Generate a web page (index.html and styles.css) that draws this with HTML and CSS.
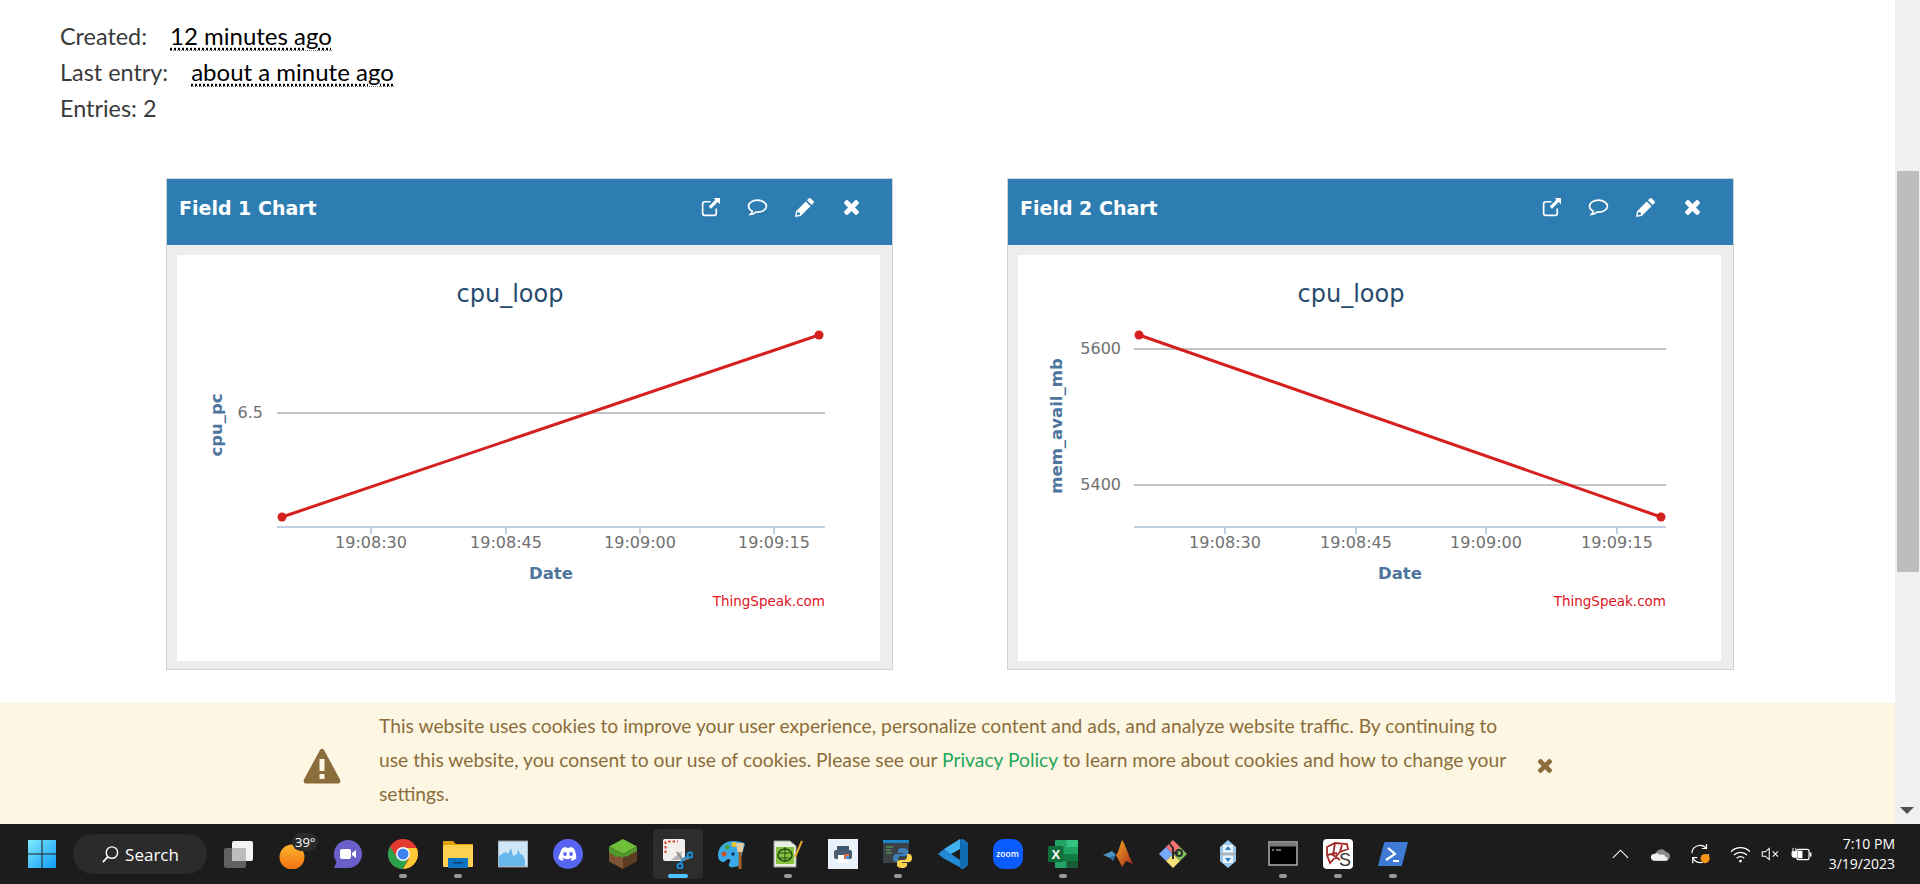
FILE: index.html
```html
<!DOCTYPE html>
<html lang="en">
<head>
    <meta charset="UTF-8">
    <meta name="viewport" content="width=device-width, initial-scale=1.0">
    <title>Channel</title>
    <link rel="stylesheet" href="styles.css">
</head>
<body>
    <div class="window">
        <div class="page">
            <div class="channel-info">
                <div>Created: <abbr class="timeago">12 minutes ago</abbr></div>
                <div>Last entry: <abbr class="timeago">about a minute ago</abbr></div>
                <div>Entries: 2</div>
            </div>

            <div class="charts">
                <section class="card">
                    <header class="card-head">
                        <h3>Field 1 Chart</h3>
                        <div class="card-tools">
                            <svg viewBox="0 0 20 20"><path class="tool-line" d="M15.5 11v4.5a2 2 0 0 1-2 2h-9a2 2 0 0 1-2-2v-9a2 2 0 0 1 2-2H10"/><path class="tool-fill" d="M13 1h6v6l-2.2-2.2-6.3 6.4-2.2-2.2 6.4-6.3z"/></svg>
                            <svg viewBox="0 0 20 20"><path class="tool-line" d="M10 3c-4.7 0-8.5 2.5-8.5 5.8 0 2 1.4 3.7 3.5 4.7-.2 1.2-.8 2.3-1.6 3 2 0 3.900-.9 5.200-2.200.4 0 .9.1 1.400.1 4.700 0 8.500-2.600 8.500-5.600S14.700 3 10 3z"/></svg>
                            <svg viewBox="0 0 20 20"><path class="tool-fill" d="M14 1.5a1.5 1.5 0 0 1 2.100 0l2.400 2.400a1.500 1.500 0 0 1 0 2.100l-1.700 1.700-4.500-4.500zM11.200 4.300l4.500 4.500L6.400 18.100 1 19l.9-5.400zM3.200 14.200l-.6 3.200 3.200-.6-.5-2.100z"/></svg>
                            <svg viewBox="0 0 20 20"><path class="tool-fill" d="M6.500 3.200 10 6.700l3.500-3.500a1.200 1.200 0 0 1 1.700 0l1.600 1.600a1.200 1.200 0 0 1 0 1.700L13.300 10l3.500 3.500a1.200 1.200 0 0 1 0 1.700l-1.600 1.600a1.200 1.200 0 0 1-1.700 0L10 13.300l-3.500 3.500a1.200 1.200 0 0 1-1.700 0l-1.600-1.600a1.200 1.200 0 0 1 0-1.700L6.700 10 3.200 6.500a1.200 1.200 0 0 1 0-1.700l1.600-1.600a1.200 1.200 0 0 1 1.700 0z"/></svg>
                        </div>
                    </header>
                    <div class="card-body">
                        <svg class="chart" viewBox="0 0 703 406">
                            <text class="chart-title" x="333" y="47">cpu_loop</text>
                            <line class="grid" x1="100" y1="158" x2="648" y2="158"/>
                            <line class="axis" x1="100" y1="272" x2="648" y2="272"/>
                            <line class="axis" x1="194" y1="272" x2="194" y2="279"/>
                            <line class="axis" x1="329" y1="272" x2="329" y2="279"/>
                            <line class="axis" x1="463" y1="272" x2="463" y2="279"/>
                            <line class="axis" x1="597" y1="272" x2="597" y2="279"/>
                            <text class="tick" x="194" y="293">19:08:30</text>
                            <text class="tick" x="329" y="293">19:08:45</text>
                            <text class="tick" x="463" y="293">19:09:00</text>
                            <text class="tick" x="597" y="293">19:09:15</text>
                            <text class="tick tick-y" x="86" y="163">6.5</text>
                            <text class="axis-title" x="374" y="324">Date</text>
                            <text class="axis-title" transform="translate(45 170) rotate(-90)">cpu_pc</text>
                            <text class="credit" x="648" y="351">ThingSpeak.com</text>
                            <line class="series" x1="105" y1="262" x2="642" y2="80"/>
                            <circle class="point" cx="105" cy="262" r="4.5"/>
                            <circle class="point" cx="642" cy="80" r="4.5"/>
                        </svg>
                    </div>
                </section>

                <section class="card">
                    <header class="card-head">
                        <h3>Field 2 Chart</h3>
                        <div class="card-tools">
                            <svg viewBox="0 0 20 20"><path class="tool-line" d="M15.5 11v4.5a2 2 0 0 1-2 2h-9a2 2 0 0 1-2-2v-9a2 2 0 0 1 2-2H10"/><path class="tool-fill" d="M13 1h6v6l-2.2-2.2-6.3 6.4-2.2-2.2 6.4-6.3z"/></svg>
                            <svg viewBox="0 0 20 20"><path class="tool-line" d="M10 3c-4.7 0-8.5 2.5-8.5 5.8 0 2 1.4 3.7 3.5 4.7-.2 1.2-.8 2.3-1.6 3 2 0 3.900-.9 5.200-2.200.4 0 .9.1 1.400.1 4.700 0 8.500-2.600 8.500-5.600S14.700 3 10 3z"/></svg>
                            <svg viewBox="0 0 20 20"><path class="tool-fill" d="M14 1.5a1.5 1.5 0 0 1 2.100 0l2.400 2.400a1.500 1.500 0 0 1 0 2.100l-1.700 1.700-4.500-4.500zM11.200 4.300l4.500 4.500L6.400 18.100 1 19l.9-5.400zM3.200 14.200l-.6 3.200 3.200-.6-.5-2.100z"/></svg>
                            <svg viewBox="0 0 20 20"><path class="tool-fill" d="M6.500 3.200 10 6.700l3.500-3.500a1.200 1.200 0 0 1 1.700 0l1.600 1.600a1.200 1.200 0 0 1 0 1.700L13.300 10l3.500 3.500a1.200 1.200 0 0 1 0 1.700l-1.600 1.600a1.200 1.200 0 0 1-1.700 0L10 13.300l-3.500 3.500a1.200 1.200 0 0 1-1.700 0l-1.600-1.600a1.200 1.200 0 0 1 0-1.700L6.700 10 3.200 6.500a1.200 1.200 0 0 1 0-1.700l1.600-1.600a1.200 1.200 0 0 1 1.700 0z"/></svg>
                        </div>
                    </header>
                    <div class="card-body">
                        <svg class="chart" viewBox="0 0 703 406">
                            <text class="chart-title" x="333" y="47">cpu_loop</text>
                            <line class="grid" x1="116" y1="94" x2="648" y2="94"/>
                            <line class="grid" x1="116" y1="230" x2="648" y2="230"/>
                            <line class="axis" x1="116" y1="272" x2="648" y2="272"/>
                            <line class="axis" x1="207" y1="272" x2="207" y2="279"/>
                            <line class="axis" x1="338" y1="272" x2="338" y2="279"/>
                            <line class="axis" x1="468" y1="272" x2="468" y2="279"/>
                            <line class="axis" x1="599" y1="272" x2="599" y2="279"/>
                            <text class="tick" x="207" y="293">19:08:30</text>
                            <text class="tick" x="338" y="293">19:08:45</text>
                            <text class="tick" x="468" y="293">19:09:00</text>
                            <text class="tick" x="599" y="293">19:09:15</text>
                            <text class="tick tick-y" x="103" y="99">5600</text>
                            <text class="tick tick-y" x="103" y="235">5400</text>
                            <text class="axis-title" x="382" y="324">Date</text>
                            <text class="axis-title" transform="translate(44 171) rotate(-90)">mem_avail_mb</text>
                            <text class="credit" x="648" y="351">ThingSpeak.com</text>
                            <line class="series" x1="121" y1="80" x2="643" y2="262"/>
                            <circle class="point" cx="121" cy="80" r="4.5"/>
                            <circle class="point" cx="643" cy="262" r="4.5"/>
                        </svg>
                    </div>
                </section>
            </div>

            <div class="cookie-bar">
                <svg class="cookie-warn" viewBox="0 0 38 36"><path d="M19 1c1 0 1.800.5 2.300 1.400l15.800 29.300c.9 1.700-.3 3.800-2.300 3.800H3.200c-2 0-3.200-2.100-2.300-3.800L16.700 2.400C17.200 1.500 18 1 19 1z"/><rect x="16.5" y="11" width="5" height="12" fill="#fdf6e3"/><rect x="16.5" y="26" width="5" height="5" fill="#fdf6e3"/></svg>
                <p class="cookie-text">This website uses cookies to improve your user experience, personalize content and ads, and analyze website traffic. By continuing to<br>use this website, you consent to our use of cookies. Please see our <a href="#">Privacy Policy</a> to learn more about cookies and how to change your<br>settings.</p>
                <svg class="cookie-close" viewBox="0 0 20 20"><path d="M6.500 3.200 10 6.700l3.500-3.500a1.200 1.200 0 0 1 1.700 0l1.600 1.600a1.200 1.200 0 0 1 0 1.700L13.300 10l3.500 3.500a1.200 1.200 0 0 1 0 1.700l-1.600 1.600a1.200 1.200 0 0 1-1.700 0L10 13.300l-3.500 3.500a1.200 1.200 0 0 1-1.700 0l-1.600-1.600a1.200 1.200 0 0 1 0-1.700L6.700 10 3.200 6.500a1.200 1.200 0 0 1 0-1.700l1.600-1.600a1.200 1.200 0 0 1 1.700 0z"/></svg>
            </div>
        </div>

        <div class="scrollbar">
            <div class="scroll-thumb"></div>
            <div class="scroll-arrow"></div>
        </div>
    </div>

    <footer class="taskbar">
        <div class="slot">
            <svg viewBox="0 0 30 30"><defs><linearGradient id="win" x1="0" y1="0" x2="1" y2="1"><stop offset="0" stop-color="#7eeaff"/><stop offset="1" stop-color="#0f9bf5"/></linearGradient></defs><path fill="url(#win)" d="M1 1h13.500v13.500H1zM15.500 1H29v13.500H15.500zM1 15.500h13.500V29H1zM15.500 15.500H29V29H15.500z"/></svg>
        </div>
        <div class="search-pill">
            <svg viewBox="0 0 20 20"><circle cx="11.5" cy="8" r="6" fill="none" stroke="#fff" stroke-width="1.5"/><path d="M7.300 12.300 2 18" stroke="#fff" stroke-width="1.8" fill="none"/></svg>
            <span>Search</span>
        </div>
        <div class="slot">
            <svg viewBox="0 0 30 30"><rect x="9" y="2" width="21" height="20" rx="2" fill="#f4f4f4"/><rect x="1" y="9" width="22" height="20" rx="2" fill="#6d6d6d" fill-opacity=".85"/><rect x="9" y="9" width="14" height="13" fill="#bdbdbd"/></svg>
        </div>
        <div class="slot">
            <svg viewBox="0 0 30 30"><defs><linearGradient id="sun" x1="0" y1="0" x2="0" y2="1"><stop offset="0" stop-color="#fdb52c"/><stop offset="1" stop-color="#f0700f"/></linearGradient></defs><circle cx="14" cy="18" r="12.5" fill="url(#sun)"/></svg>
            <span class="temp">39°</span>
        </div>
        <div class="slot">
            <svg viewBox="0 0 30 30"><path fill="#6a5fc8" d="M15 1a14 14 0 0 1 0 28H1l2.500-6A14 14 0 0 1 15 1z"/><rect x="7" y="10" width="11" height="10" rx="2" fill="#fff"/><path fill="#fff" d="M19 14l4-3v8l-4-3z"/></svg>
        </div>
        <div class="slot running">
            <svg viewBox="0 0 30 30"><circle cx="15" cy="15" r="15" fill="#e33b2e"/><path fill="#2aa24a" d="M2 7.500A15 15 0 0 0 15 30l5-10H10z"/><path fill="#fcc934" d="M15 9h13.700A15 15 0 0 1 15 30l6-10z"/><circle cx="15" cy="15" r="7" fill="#fff"/><circle cx="15" cy="15" r="5.500" fill="#3d82f0"/></svg>
        </div>
        <div class="slot running">
            <svg viewBox="0 0 30 30"><path fill="#e0a100" d="M0 3a1 1 0 0 1 1-1h9l3 3h17v6H0z"/><rect y="6" width="30" height="22" rx="1" fill="#fcd14f"/><path fill="#0a74c4" d="M5 19h20v9a1 1 0 0 1-1 1H6a1 1 0 0 1-1-1z"/><rect x="10" y="23" width="10" height="1.5" fill="#063f70"/></svg>
        </div>
        <div class="slot">
            <svg viewBox="0 0 30 30"><rect y="2" width="30" height="26" fill="#cfe6f6" stroke="#8b8f93"/><path fill="#68b7ec" d="M1 27V17l4-3 3-1 2 2 3-6 2 8 4-2 1-5 2 5 3 1 2 5v6z"/></svg>
        </div>
        <div class="slot">
            <svg viewBox="0 0 30 30"><circle cx="15" cy="15" r="15" fill="#5865f2"/><path fill="#fff" d="M9.500 9c2-.9 3.500-1 3.800-1l.5 1c.8-.1 1.600-.1 2.400 0l.5-1c.3 0 1.800.1 3.800 1 2 3 3 6.500 2.700 10.500-1.700 1.200-3.200 1.900-4.600 2.300l-1-1.600c.6-.2 1.100-.5 1.600-.8l-.4-.3c-3 1.400-6.100 1.400-9.200 0l-.4.3c.5.3 1 .6 1.600.8l-1 1.600c-1.400-.4-2.900-1.100-4.600-2.300C6.600 15.500 7.500 12 9.500 9z"/><ellipse cx="12" cy="15" rx="1.8" ry="2" fill="#5865f2"/><ellipse cx="18" cy="15" rx="1.8" ry="2" fill="#5865f2"/></svg>
        </div>
        <div class="slot">
            <svg viewBox="0 0 30 30"><path fill="#6fbf3b" d="M15 0 29 7.500 15 15 1 7.500z"/><path fill="#7c5433" d="M1 7.500 15 15v15L1 22.500z"/><path fill="#5c3c22" d="M29 7.500 15 15v15l14-7.500z"/><path fill="#4f9a2b" d="M1 7.500 15 15v4l-4-2-3 1-7-5zM29 7.500 15 15v3l5-1 3-2 6-3z"/></svg>
        </div>
        <div class="slot active">
            <svg viewBox="0 0 30 30"><rect x="0" y="0" width="22" height="22" rx="2" fill="#f2efed"/><path d="M2.500 14V3.500A1 1 0 0 1 3.500 2.500H15" fill="none" stroke="#d8452e" stroke-width="2" stroke-dasharray="2.5 2"/><path d="M19 12 18 21 8 21z" fill="#b5b5b5"/><path d="M14 13 19 20 M26 19 19 21" stroke="#8c8c8c" stroke-width="2"/><circle cx="27" cy="16" r="2.5" fill="none" stroke="#1b8fd8" stroke-width="2"/><circle cx="17" cy="27" r="2.5" fill="none" stroke="#1b8fd8" stroke-width="2"/><path d="M25 17 19 21 18 25" fill="none" stroke="#1b8fd8" stroke-width="2"/></svg>
        </div>
        <div class="slot">
            <svg viewBox="0 0 30 30"><path fill="#39a9e8" d="M15 2C7 2 0 8 0 16c0 5 3 7 5 7 3 0 3-3 6-3 2 0 1 3 0 5-1 2 1 4 5 3l5-1 3-12 3-10C25 3 20 2 15 2z"/><circle cx="6" cy="15" r="2.5" fill="#c9502d"/><circle cx="9" cy="8" r="2.5" fill="#46a049"/><circle cx="16" cy="5.5" r="2.5" fill="#efc21e"/><circle cx="15" cy="15" r="1.8" fill="#143a5e"/><rect x="20.5" y="13" width="3" height="17" fill="#a4622a"/><path fill="#e6c9a0" d="M18 4h8l-1.500 9h-5z"/></svg>
        </div>
        <div class="slot running">
            <svg viewBox="0 0 30 30"><path fill="#e8eee4" stroke="#9aa09a" d="M1 2h16l6 5v21H1z"/><rect x="3" y="8" width="18" height="17" fill="#86c440"/><ellipse cx="12" cy="16" rx="7" ry="6" fill="none" stroke="#1f4d10" stroke-width="1.5"/><path d="M6 14h12M7 19h10M12 8v15" stroke="#1f4d10"/><path d="M22 18 29 2" stroke="#e0a92c" stroke-width="2"/></svg>
        </div>
        <div class="slot">
            <svg viewBox="0 0 30 30"><rect width="30" height="30" fill="#ebf1fa"/><path fill="#3e5870" d="M9 7h12v4H9z"/><rect x="6" y="11" width="18" height="9" rx="2" fill="#4a5d70"/><rect x="10" y="16" width="10" height="8" fill="#fff"/><rect x="16" y="15" width="5" height="5" fill="#e56b4a"/><rect x="18" y="17" width="3" height="3" fill="#4a8ee0"/></svg>
        </div>
        <div class="slot running">
            <svg viewBox="0 0 30 30"><rect x="0" y="1" width="26" height="23" fill="#3b4144"/><rect y="1" width="26" height="3" fill="#1b85c8"/><path d="M3 8h7M3 11h5M3 14h6" stroke="#5cb85c"/><path fill="#3f7fb8" d="M19 9c-4 0-4 2-4 3v2h5v1h-7c-2 0-3 2-3 4s1 4 3 4h2v-3c0-1.500 1.500-3 3-3h4c1.500 0 3-1 3-3v-2c0-2-2-3-6-3z"/><path fill="#fdd449" d="M19 29c4 0 5-2 5-3v-2h-5v-1h7c2 0 3-2 3-4s-1-4-3-4h-2v3c0 1.500-1.500 3-3 3h-4c-1.500 0-3 1-3 3v2c0 2 2 3 5 3z"/></svg>
        </div>
        <div class="slot">
            <svg viewBox="0 0 30 30"><path fill="#2489d3" d="M0 15 5 11 25 0l5 4L13 15l17 11-5 4L5 19z"/><path fill="#0f6cb0" d="M22 0 30 4v22l-8 4z"/><path fill="#3fb1ef" d="M22 0v10L13 15 6 10z"/></svg>
        </div>
        <div class="slot">
            <div class="zoom-icon">zoom</div>
        </div>
        <div class="slot running">
            <svg viewBox="0 0 30 30"><rect x="7" y="1" width="23" height="28" rx="1" fill="#21a366"/><rect x="18.5" y="1" width="11.5" height="7" fill="#33c481"/><rect x="7" y="15" width="23" height="7" fill="#107c41"/><rect x="18.5" y="8" width="11.5" height="7" fill="#21a366"/><rect x="18.5" y="22" width="11.5" height="7" fill="#185c37"/><rect x="0" y="7" width="15.5" height="16" rx="1" fill="#0f6e3a"/><text class="excel-x" x="7.8" y="20">X</text></svg>
        </div>
        <div class="slot">
            <svg viewBox="0 0 30 30"><path fill="#4b94c4" d="M0 16 9 12l4 4-6 3z"/><path fill="#2f6f9e" d="M7 19l6-3-3 6z"/><defs><linearGradient id="mat" x1="0" y1="0" x2="1" y2="1"><stop offset="0" stop-color="#f5a623"/><stop offset="1" stop-color="#a8281c"/></linearGradient></defs><path fill="url(#mat)" d="M19 1c3 3 6 15 11 24l-7-3-4 6c-2-5-4-8-6-12 2-1 3-7 6-15z"/></svg>
        </div>
        <div class="slot">
            <svg viewBox="0 0 30 30"><path fill="#76a9fa" d="M8 8 15 15 8 22 1 15z"/><path fill="#f57373" d="M15 1 22 8 15 15 8 8z"/><path fill="#7ec35a" d="M22 8 29 15 22 22 15 15z"/><path fill="#f7df7a" d="M15 15 22 22 15 29 8 22z"/><path d="M11 4 15 9V20M15 14 20 14" stroke="#2c2c2c" stroke-width="2" fill="none"/><circle cx="21" cy="14" r="3" fill="none" stroke="#2c2c2c" stroke-width="2"/></svg>
        </div>
        <div class="slot">
            <svg viewBox="0 0 30 30"><path fill="#9bc9ef" d="M15 1 23 8V22L15 29 7 22V8z"/><rect x="10" y="6" width="10" height="8" fill="#eaf4fc"/><rect x="10" y="16" width="10" height="8" fill="#eaf4fc"/><rect x="7" y="13.5" width="16" height="3" fill="#a9b6c2"/><path fill="#2f7fc7" d="M15 7l3 4h-6zM15 23l-3-4h6z"/></svg>
        </div>
        <div class="slot running">
            <svg viewBox="0 0 30 30"><rect x="1" y="3" width="28" height="23" fill="#000" stroke="#b0b0b0" stroke-width="1.5"/><rect x="2" y="4" width="26" height="3.5" fill="#777"/><path d="M4 11h2M8 11h5" stroke="#ddd"/></svg>
        </div>
        <div class="slot running">
            <svg viewBox="0 0 30 30"><rect width="30" height="30" rx="4" fill="#fff"/><path d="M4 8 12 4 24 5 25 10 17 13 7 24 4 16zM12 4 10 16 17 21M4 16 14 14M19 6 17 13" fill="none" stroke="#a32a2a" stroke-width="1.8"/><text class="ks-s" x="16" y="27">S</text></svg>
        </div>
        <div class="slot running">
            <svg viewBox="0 0 30 30"><path fill="#3f7ad6" d="M7 3h22a.8 .8 0 0 1 .8 1L24 26a1.200 1.200 0 0 1-1 1H1a.8 .8 0 0 1-.8-1L6 4a1.200 1.200 0 0 1 1-1z"/><path d="M10 9l7 6-9 6" fill="none" stroke="#fff" stroke-width="2.2"/><path d="M15 22h6" stroke="#fff" stroke-width="2"/></svg>
        </div>

        <div class="tray">
            <svg class="tray-chevron" viewBox="0 0 18 10"><path d="M1 9 9 1l8 8" fill="none" stroke="#fff" stroke-width="1.2"/></svg>
            <svg class="tray-cloud" viewBox="0 0 22 14"><path fill="#8b8b8b" d="M6 7a6 6 0 0 1 11-2 4.500 4.500 0 0 1-1 9H6z"/><path fill="#f1f1f1" d="M5 14a3.500 3.500 0 0 1-1-7c2-1 4-1 6 1 3-1 6 0 6 2 3 0 3 4 1 4z"/></svg>
            <svg class="tray-sync" viewBox="0 0 24 24"><path d="M2 11a9 9 0 0 1 16-5M20 12a9 9 0 0 1-1 3M3 16a9 9 0 0 0 11 5" fill="none" stroke="#fff" stroke-width="1.3"/><path d="M18 1v5h-5M3 22v-6h5" fill="none" stroke="#fff" stroke-width="1.3"/><circle cx="16.5" cy="17" r="5" fill="#f79413"/></svg>
            <svg class="tray-wifi" viewBox="0 0 22 18"><path d="M1 6a14 14 0 0 1 20 0M4 9.500a10 10 0 0 1 14 0M7 13a5.500 5.500 0 0 1 8 0" fill="none" stroke="#fff" stroke-width="1.3"/><circle cx="11" cy="16" r="1.5" fill="#fff"/></svg>
            <svg class="tray-volume" viewBox="0 0 22 16"><path d="M1 5.500h3.500L9 1.500v13l-4.500-4H1z" fill="none" stroke="#fff" stroke-width="1.2"/><path d="M13 5l6 6M19 5l-6 6" stroke="#fff" stroke-width="1.2"/></svg>
            <svg class="tray-battery" viewBox="0 0 22 18"><rect x="6" y="3.5" width="13" height="11" rx="2" fill="none" stroke="#fff" stroke-width="1.3"/><path fill="#fff" d="M7 5h5v8H7zM20 7h1.500v4H20z"/><path d="M1 6h5v4a2 2 0 0 1-2 2H3a2 2 0 0 1-2-2zM2 2v4M5 2v4" fill="#fff" stroke="#fff"/></svg>
            <div class="clock">
                <div>7:10 PM</div>
                <div>3/19/2023</div>
            </div>
        </div>
    </footer>
</body>
</html>
```

FILE: styles.css
```css
html, body {
    margin: 0;
    height: 100%;
    overflow: hidden;
}
body {
    display: flex;
    flex-direction: column;
    font-family: "Lato", "Noto Sans", sans-serif;
    background-color: #fff;
}
.window {
    flex: 1;
    display: flex;
    min-height: 0;
}
.page {
    flex: 1;
    display: flex;
    flex-direction: column;
    min-width: 0;
}

/* channel info */
.channel-info {
    padding: 18px 0 0 60px;
    font-size: 23.4px;
    line-height: 36px;
    color: #3a3a3a;
}
.timeago {
    margin-left: 17px;
    font-size: 24px;
    color: #000;
    text-decoration: underline dotted #000;
    text-underline-offset: 3px;
    border-bottom: 1px dotted #777;
}

/* chart cards */
.charts {
    display: flex;
    gap: 114px;
    padding: 52px 0 0 166px;
}
.card {
    width: 727px;
    height: 492px;
    box-sizing: border-box;
    border: 1px solid #d2d2d2;
    background-color: #ededed;
}
.card-head {
    display: flex;
    align-items: center;
    justify-content: space-between;
    height: 66px;
    box-sizing: border-box;
    padding: 0 30px 9px 12px;
    background-color: #2e7db2;
    color: #fff;
}
.card-head h3 {
    margin: 0;
    font-family: "DejaVu Sans", sans-serif;
    font-size: 19px;
    font-weight: bold;
}
.card-tools {
    display: flex;
    align-items: center;
    gap: 26px;
}
.card-tools svg {
    width: 21px;
    height: 21px;
}
.tool-line {
    fill: none;
    stroke: #fff;
    stroke-width: 1.6;
}
.tool-fill {
    fill: #fff;
}
.card-body {
    padding: 10px 13px 8px 10px;
}
.chart {
    display: block;
    width: 703px;
    height: 406px;
    background-color: #fff;
    font-family: "DejaVu Sans", sans-serif;
}
.chart-title {
    font-size: 24px;
    fill: #274b6d;
    text-anchor: middle;
}
.grid {
    stroke: #c4c4c4;
    stroke-width: 2;
}
.axis {
    stroke: #c0d0e0;
    stroke-width: 2;
}
.tick {
    font-size: 16px;
    fill: #707070;
    text-anchor: middle;
}
.tick-y {
    text-anchor: end;
}
.axis-title {
    font-size: 16.5px;
    font-weight: bold;
    fill: #4d759e;
    text-anchor: middle;
}
.credit {
    font-size: 13.5px;
    fill: #e0131c;
    text-anchor: end;
}
.series {
    stroke: #d62020;
    stroke-width: 3;
}
.point {
    fill: #d62020;
}

/* cookie notice */
.cookie-bar {
    margin-top: auto;
    height: 121px;
    display: flex;
    align-items: center;
    padding-left: 303px;
    background-color: #fdf6e3;
    color: #8a6d3b;
}
.cookie-warn {
    width: 38px;
    height: 36px;
    fill: #8a6d3b;
    margin-top: 4px;
}
.cookie-text {
    width: 1125px;
    margin: 0 0 8px 38px;
    font-size: 19.25px;
    line-height: 34px;
    white-space: nowrap;
}
.cookie-text a {
    color: #1fa65a;
    text-decoration: none;
}
.cookie-close {
    width: 20px;
    height: 20px;
    fill: #8a6d3b;
    margin: 5px 0 0 31px;
}

/* fake scrollbar */
.scrollbar {
    width: 25px;
    flex-shrink: 0;
    display: flex;
    flex-direction: column;
    align-items: flex-end;
    padding: 171px 1px 10px 0;
    box-sizing: border-box;
    background-color: #f0f0f0;
}
.scroll-thumb {
    width: 22px;
    height: 401px;
    background-color: #bdbdbd;
}
.scroll-arrow {
    margin: auto 5px 0 0;
    border-left: 7px solid transparent;
    border-right: 7px solid transparent;
    border-top: 7px solid #505050;
}

/* taskbar */
.taskbar {
    height: 60px;
    flex-shrink: 0;
    display: flex;
    align-items: center;
    padding-left: 14px;
    background-color: #1c1c1c;
    font-family: "Open Sans", sans-serif;
    color: #fff;
}
.slot {
    position: relative;
    width: 55px;
    height: 60px;
    flex-shrink: 0;
    display: flex;
    align-items: center;
    justify-content: center;
}
.slot svg {
    width: 30px;
    height: 30px;
}
.slot.running::after,
.slot.active::after {
    content: "";
    position: absolute;
    bottom: 6px;
    left: 23.5px;
    width: 8px;
    height: 4px;
    border-radius: 2px;
    background-color: #9a9a9a;
}
.slot.active::before {
    content: "";
    position: absolute;
    z-index: 0;
    top: 5px;
    bottom: 5px;
    left: 3px;
    right: 2px;
    border-radius: 5px;
    background-color: #2d2d2d;
}
.slot.active svg {
    position: relative;
}
.slot.active::after {
    z-index: 1;
    left: 18px;
    width: 20px;
    background-color: #4cc2ff;
}
.search-pill {
    width: 134px;
    height: 40px;
    margin: 0 3px 0 4px;
    box-sizing: border-box;
    display: flex;
    align-items: center;
    justify-content: center;
    gap: 5px;
    border-radius: 20px;
    background-color: #2b2b2b;
    font-size: 17px;
}
.search-pill svg {
    width: 19px;
    height: 19px;
}
.temp {
    position: absolute;
    top: 9px;
    left: 27px;
    padding: 0 3px;
    border-radius: 9px;
    background-color: #2b2b2b;
    font-size: 13px;
    line-height: 18px;
}
.zoom-icon {
    width: 30px;
    height: 30px;
    border-radius: 11px;
    background-color: #0b5cff;
    font-size: 8.5px;
    font-weight: 600;
    line-height: 30px;
    text-align: center;
}
.excel-x {
    font-family: "Liberation Sans", sans-serif;
    font-size: 13px;
    font-weight: bold;
    fill: #fff;
    text-anchor: middle;
}
.ks-s {
    font-family: "Liberation Sans", sans-serif;
    font-size: 18px;
    fill: #333;
}
.tray {
    margin-left: auto;
    display: flex;
    align-items: center;
    padding-right: 25px;
}
.tray-chevron {
    width: 17px;
    height: 10px;
}
.tray-cloud {
    width: 21px;
    height: 14px;
    margin-left: 21px;
}
.tray-sync {
    width: 22px;
    height: 22px;
    margin-left: 19px;
}
.tray-wifi {
    width: 21px;
    height: 17px;
    margin-left: 18px;
}
.tray-volume {
    width: 20px;
    height: 14px;
    margin-left: 10px;
}
.tray-battery {
    width: 21px;
    height: 17px;
    margin-left: 10px;
}
.clock {
    margin-left: 17px;
    font-size: 14px;
    line-height: 20px;
    text-align: right;
}
```
